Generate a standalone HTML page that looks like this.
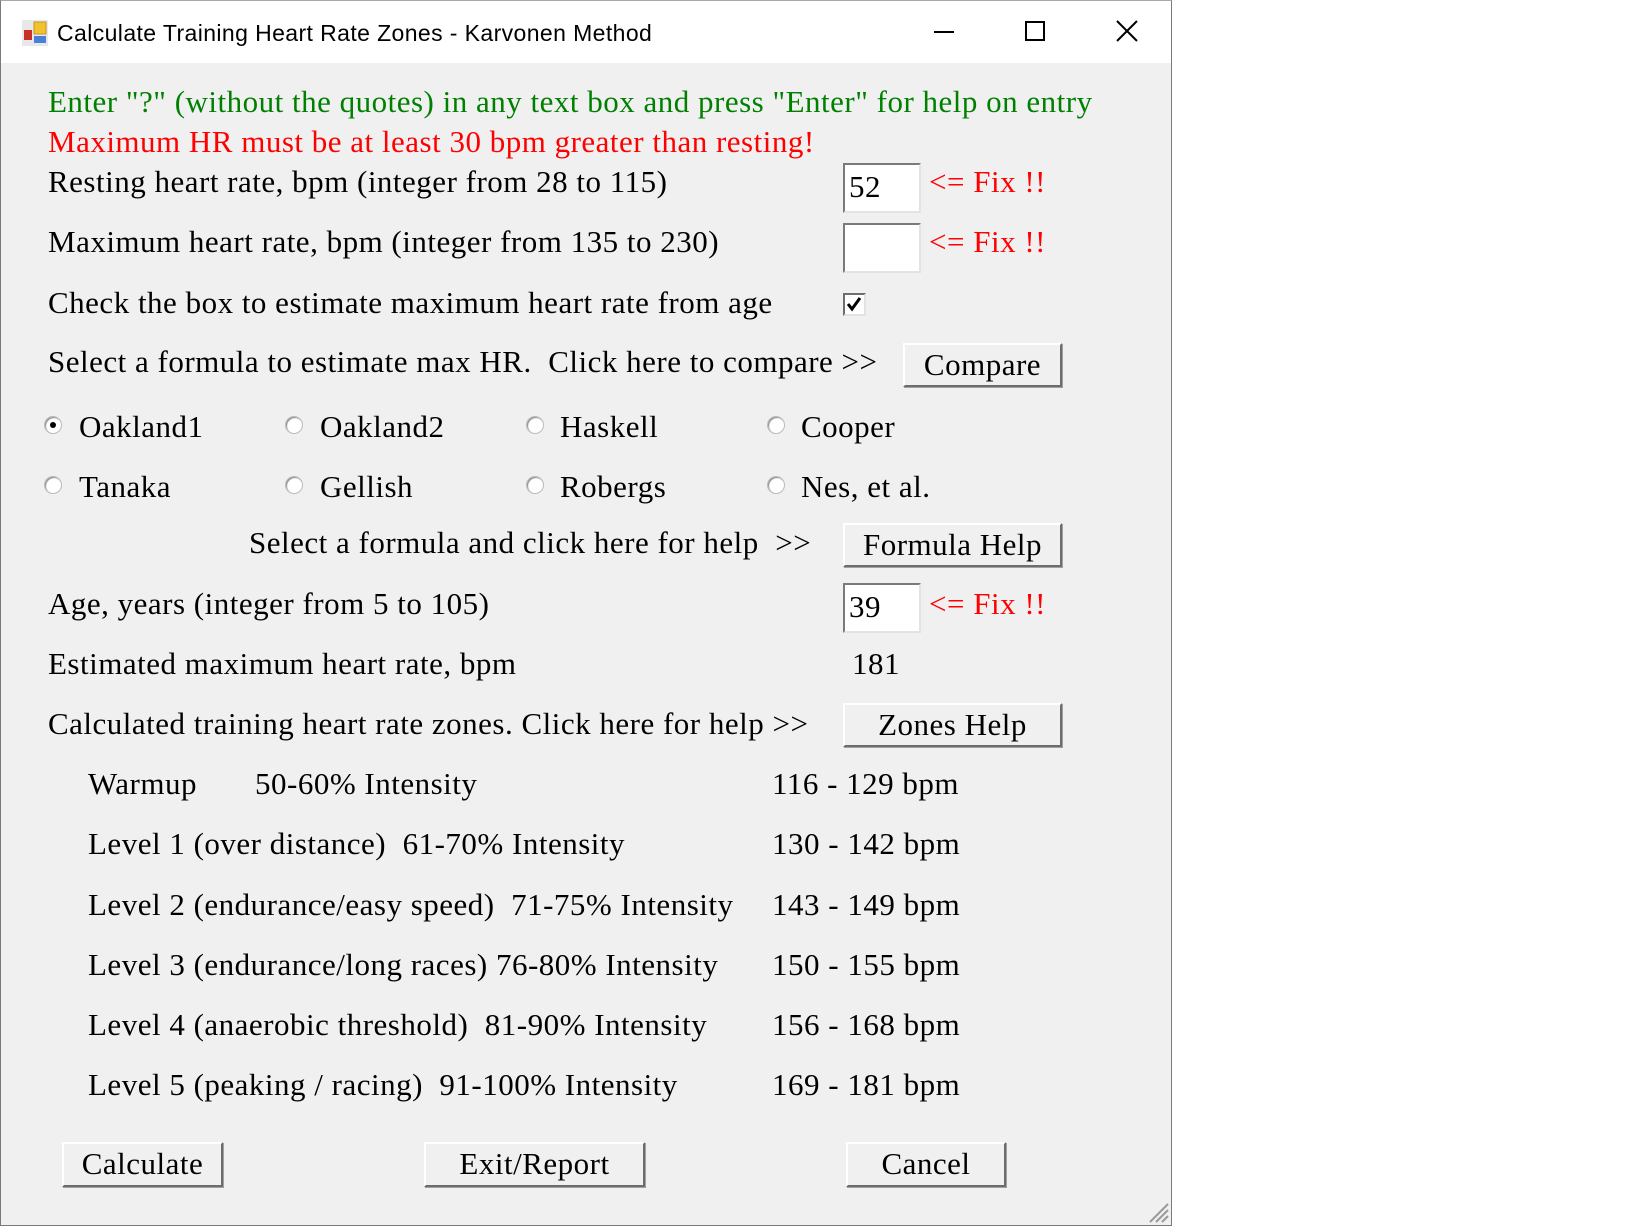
<!DOCTYPE html>
<html><head><meta charset="utf-8"><style>
*{margin:0;padding:0;box-sizing:border-box}
body{width:1641px;height:1226px;background:#fff;position:relative;overflow:hidden;font-family:"Liberation Serif",serif;font-size:31px;letter-spacing:0.5px;color:#000}
.win{position:absolute;left:0;top:0;width:1172px;height:1226px;background:#f0f0f0;border:1px solid #7a7a7a;border-top:1px solid #aaa}
.title{position:absolute;left:0;top:0;width:1170px;height:62px;background:#fff}
.tt{position:absolute;left:56px;top:18px;font-family:"Liberation Sans",sans-serif;font-size:23px;letter-spacing:0.4px;line-height:28px;white-space:nowrap}
.t{position:absolute;line-height:34px;white-space:nowrap}
.g{color:#008000}.r{color:#ff0000}
.box{position:absolute;background:#fff;border:2px solid;border-color:#7a7a7a #e3e3e3 #e3e3e3 #7a7a7a;width:78px;height:50px;font-size:31px;line-height:44px;padding-left:4px}
.btn{position:absolute;background:#f0f0f0;border:2px solid;border-color:#fff #6d6d6d #6d6d6d #fff;box-shadow:1px 1px 0 #a0a0a0;text-align:center;font-size:31px;line-height:40px}
.rad{position:absolute;width:18px;height:18px;border-radius:50%;background:#fff;border:1px solid #bbb;box-shadow:inset 1px 1px 1px #888}
.rad.on::after{content:"";position:absolute;left:5px;top:5px;width:6px;height:6px;border-radius:50%;background:#000}
</style></head><body>
<div class="win">
<div class="title">
 <svg style="position:absolute;left:20px;top:18px" width="28" height="28" viewBox="0 0 28 28">
  <rect x="1" y="1" width="26" height="26" fill="#e8e8e8"/>
  <rect x="13" y="3" width="12" height="12" fill="#f2c12e" stroke="#c9961a"/>
  <rect x="3" y="11" width="8" height="10" fill="#c8312a"/>
  <rect x="13" y="17" width="12" height="7" fill="#4a7fd8"/>
 </svg>
 <div class="tt">Calculate Training Heart Rate Zones - Karvonen Method</div>
 <div style="position:absolute;left:933px;top:30px;width:20px;height:2px;background:#000"></div>
 <div style="position:absolute;left:1024px;top:20px;width:20px;height:20px;border:2px solid #000"></div>
 <svg style="position:absolute;left:1115px;top:19px" width="22" height="22" viewBox="0 0 22 22"><path d="M1 1L21 21M21 1L1 21" stroke="#000" stroke-width="2"/></svg>
</div>
</div>

<div class="t g" style="left:48px;top:85px">Enter "?" (without the quotes) in any text box and press "Enter" for help on entry</div>
<div class="t r" style="left:48px;top:125px">Maximum HR must be at least 30 bpm greater than resting!</div>
<div class="t" style="left:48px;top:165px">Resting heart rate, bpm (integer from 28 to 115)</div>
<div class="box" style="left:843px;top:163px">52</div>
<div class="t r" style="left:929px;top:165px">&lt;= Fix !!</div>
<div class="t" style="left:48px;top:225px">Maximum heart rate, bpm (integer from 135 to 230)</div>
<div class="box" style="left:843px;top:223px"></div>
<div class="t r" style="left:929px;top:225px">&lt;= Fix !!</div>
<div class="t" style="left:48px;top:286px">Check the box to estimate maximum heart rate from age</div>
<div style="position:absolute;left:843px;top:293px;width:23px;height:23px;background:#fff;border:2px solid;border-color:#6d6d6d #e3e3e3 #e3e3e3 #6d6d6d">
 <svg width="19" height="19" viewBox="0 0 19 19" style="position:absolute;left:0;top:0"><path d="M3 9L7 14L15 3" stroke="#000" stroke-width="3" fill="none"/></svg>
</div>
<div class="t" style="left:48px;top:345px">Select a formula to estimate max HR.&nbsp; Click here to compare &gt;&gt;</div>
<div class="btn" style="left:903px;top:343px;width:159px;height:44px">Compare</div>

<div class="rad on" style="left:44px;top:416px"></div><div class="t" style="left:79px;top:410px">Oakland1</div>
<div class="rad" style="left:285px;top:416px"></div><div class="t" style="left:320px;top:410px">Oakland2</div>
<div class="rad" style="left:526px;top:416px"></div><div class="t" style="left:560px;top:410px">Haskell</div>
<div class="rad" style="left:767px;top:416px"></div><div class="t" style="left:801px;top:410px">Cooper</div>
<div class="rad" style="left:44px;top:476px"></div><div class="t" style="left:79px;top:470px">Tanaka</div>
<div class="rad" style="left:285px;top:476px"></div><div class="t" style="left:320px;top:470px">Gellish</div>
<div class="rad" style="left:526px;top:476px"></div><div class="t" style="left:560px;top:470px">Robergs</div>
<div class="rad" style="left:767px;top:476px"></div><div class="t" style="left:801px;top:470px">Nes, et al.</div>

<div class="t" style="left:249px;top:526px">Select a formula and click here for help&nbsp; &gt;&gt;</div>
<div class="btn" style="left:843px;top:523px;width:219px;height:44px">Formula Help</div>
<div class="t" style="left:48px;top:587px">Age, years (integer from 5 to 105)</div>
<div class="box" style="left:843px;top:583px">39</div>
<div class="t r" style="left:929px;top:587px">&lt;= Fix !!</div>
<div class="t" style="left:48px;top:647px">Estimated maximum heart rate, bpm</div>
<div class="t" style="left:852px;top:647px">181</div>
<div class="t" style="left:48px;top:707px">Calculated training heart rate zones. Click here for help &gt;&gt;</div>
<div class="btn" style="left:843px;top:703px;width:219px;height:44px">Zones Help</div>

<div class="t" style="left:88px;top:767px">Warmup</div><div class="t" style="left:255px;top:767px">50-60% Intensity</div><div class="t" style="left:772px;top:767px">116 - 129 bpm</div>
<div class="t" style="left:88px;top:827px">Level 1 (over distance)&nbsp; 61-70% Intensity</div><div class="t" style="left:772px;top:827px">130 - 142 bpm</div>
<div class="t" style="left:88px;top:888px">Level 2 (endurance/easy speed)&nbsp; 71-75% Intensity</div><div class="t" style="left:772px;top:888px">143 - 149 bpm</div>
<div class="t" style="left:88px;top:948px">Level 3 (endurance/long races) 76-80% Intensity</div><div class="t" style="left:772px;top:948px">150 - 155 bpm</div>
<div class="t" style="left:88px;top:1008px">Level 4 (anaerobic threshold)&nbsp; 81-90% Intensity</div><div class="t" style="left:772px;top:1008px">156 - 168 bpm</div>
<div class="t" style="left:88px;top:1068px">Level 5 (peaking / racing)&nbsp; 91-100% Intensity</div><div class="t" style="left:772px;top:1068px">169 - 181 bpm</div>

<div class="btn" style="left:62px;top:1142px;width:161px;height:45px">Calculate</div>
<div class="btn" style="left:424px;top:1142px;width:221px;height:45px">Exit/Report</div>
<div class="btn" style="left:846px;top:1142px;width:160px;height:45px">Cancel</div>

<svg style="position:absolute;left:1144px;top:1198px" width="26" height="26" viewBox="0 0 26 26"><path d="M24 6L6 24M24 12L12 24M24 18L18 24" stroke="#999" stroke-width="2"/></svg>
</body></html>
